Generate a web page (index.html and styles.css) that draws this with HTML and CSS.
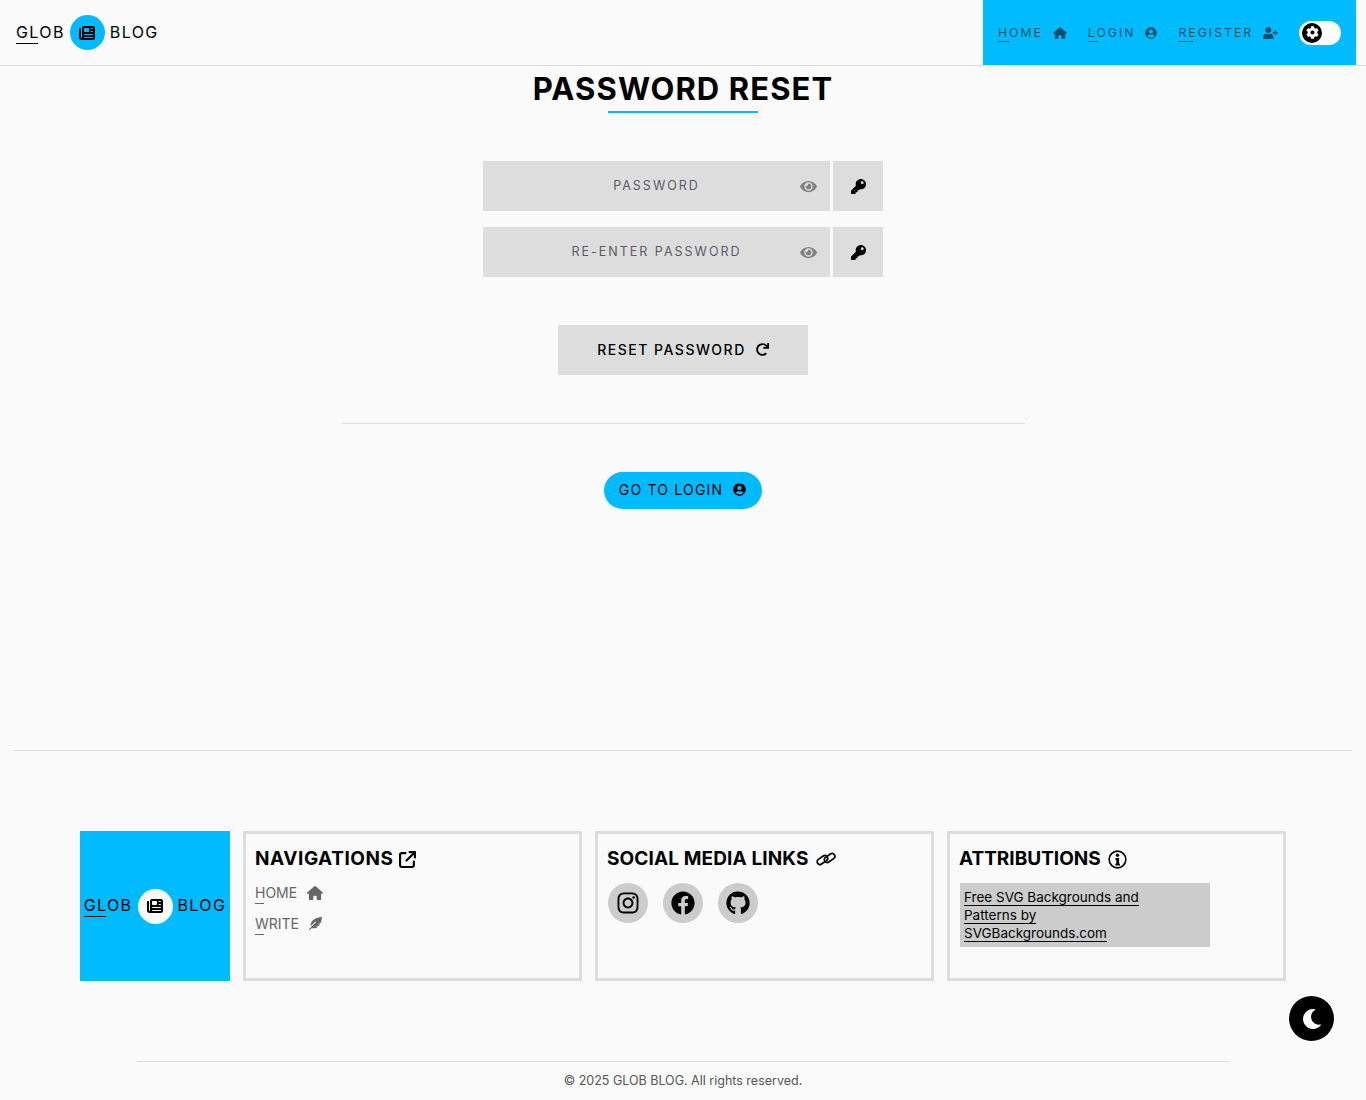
FILE: index.html
```html
<!DOCTYPE html>
<html lang="en">

<head>
    <meta charset="UTF-8">
    <title>Password Reset</title>
    <link rel="stylesheet" href="styles.css">
</head>

<body>
    <svg class="defs" aria-hidden="true">
        <symbol id="i-news" viewBox="0 0 512 512"><path d="M96 96c0-35.3 28.7-64 64-64H448c35.3 0 64 28.7 64 64V416c0 35.3-28.7 64-64 64H80c-44.2 0-80-35.8-80-80V128c0-17.7 14.3-32 32-32s32 14.3 32 32V400c0 8.8 7.2 16 16 16s16-7.2 16-16V96zm64 24v80c0 13.3 10.7 24 24 24H296c13.3 0 24-10.7 24-24V120c0-13.3-10.7-24-24-24H184c-13.3 0-24 10.7-24 24zm208-8c0 8.8 7.2 16 16 16h48c8.8 0 16-7.2 16-16s-7.2-16-16-16H384c-8.8 0-16 7.2-16 16zm0 96c0 8.8 7.2 16 16 16h48c8.8 0 16-7.2 16-16s-7.2-16-16-16H384c-8.8 0-16 7.2-16 16zM160 304c0 8.8 7.2 16 16 16H432c8.8 0 16-7.2 16-16s-7.2-16-16-16H176c-8.8 0-16 7.2-16 16zm0 96c0 8.8 7.2 16 16 16H432c8.8 0 16-7.2 16-16s-7.2-16-16-16H176c-8.8 0-16 7.2-16 16z"/></symbol>
        <symbol id="i-home" viewBox="0 0 576 512"><path d="M575.8 255.5c0 18-15 32.1-32 32.1h-32l.7 160.2c0 2.7-.2 5.4-.5 8.1V472c0 22.1-17.9 40-40 40H456c-1.1 0-2.2 0-3.3-.1c-1.4 .1-2.8 .1-4.2 .1H416 392c-22.1 0-40-17.9-40-40V448 384c0-17.7-14.3-32-32-32H256c-17.7 0-32 14.3-32 32v64 24c0 22.1-17.9 40-40 40H160 128.1c-1.5 0-3-.1-4.5-.2c-1.2 .1-2.4 .2-3.6 .2H104c-22.1 0-40-17.9-40-40V360c0-.9 0-1.9 .1-2.8V287.6H32c-18 0-32-14-32-32.1c0-9 3-17 10-24L266.4 8c7-7 15-8 22-8s15 2 21 7L564.8 231.5c8 7 12 15 11 24z"/></symbol>
        <symbol id="i-user" viewBox="0 0 496 512"><path d="M248 8C111 8 0 119 0 256s111 248 248 248 248-111 248-248S385 8 248 8zm0 96c48.6 0 88 39.4 88 88s-39.4 88-88 88-88-39.4-88-88 39.4-88 88-88zm0 344c-58.7 0-111.3-26.6-146.5-68.2 18.8-35.4 55.6-59.8 98.5-59.8 2.4 0 4.8.4 7.1 1.1 13 4.2 26.6 6.9 40.9 6.9 14.3 0 28-2.7 40.9-6.9 2.3-.7 4.7-1.1 7.1-1.1 42.9 0 79.7 24.4 98.5 59.8C359.3 421.4 306.7 448 248 448z"/></symbol>
        <symbol id="i-user-plus" viewBox="0 0 640 512"><path d="M624 208h-64v-64c0-8.8-7.2-16-16-16h-32c-8.8 0-16 7.2-16 16v64h-64c-8.8 0-16 7.2-16 16v32c0 8.8 7.2 16 16 16h64v64c0 8.8 7.2 16 16 16h32c8.8 0 16-7.2 16-16v-64h64c8.8 0 16-7.2 16-16v-32c0-8.8-7.2-16-16-16zm-400 48c70.7 0 128-57.3 128-128S294.7 0 224 0 96 57.3 96 128s57.3 128 128 128zm89.6 32h-16.7c-22.2 10.2-46.9 16-72.9 16s-50.6-5.8-72.9-16h-16.7C60.2 288 0 348.2 0 422.4V464c0 26.5 21.5 48 48 48h352c26.5 0 48-21.5 48-48v-41.6c0-74.2-60.2-134.4-134.4-134.4z"/></symbol>
        <symbol id="i-cog" viewBox="0 0 512 512"><path d="M487.4 315.7l-42.6-24.6c4.3-23.2 4.3-47 0-70.2l42.6-24.6c4.9-2.8 7.1-8.6 5.5-14-11.1-35.6-30-67.8-54.7-94.6-3.8-4.1-10-5.1-14.8-2.3L380.8 110c-17.9-15.4-38.5-27.3-60.8-35.1V25.8c0-5.6-3.9-10.5-9.4-11.7-36.7-8.2-74.3-7.8-109.2 0-5.5 1.2-9.4 6.1-9.4 11.7V75c-22.2 7.9-42.8 19.8-60.8 35.1L88.7 85.5c-4.9-2.8-11-1.9-14.8 2.3-24.7 26.7-43.6 58.9-54.7 94.6-1.7 5.4.6 11.2 5.5 14L67.3 221c-4.3 23.2-4.3 47 0 70.2l-42.6 24.6c-4.9 2.8-7.1 8.6-5.5 14 11.1 35.6 30 67.8 54.7 94.6 3.8 4.1 10 5.1 14.8 2.3l42.6-24.6c17.9 15.4 38.5 27.3 60.8 35.1v49.2c0 5.6 3.9 10.5 9.4 11.7 36.7 8.2 74.3 7.8 109.2 0 5.5-1.2 9.4-6.1 9.4-11.7v-49.2c22.2-7.9 42.8-19.8 60.8-35.1l42.6 24.6c4.9 2.8 11 1.9 14.8-2.3 24.7-26.7 43.6-58.9 54.7-94.6 1.5-5.5-.7-11.3-5.6-14.1zM256 336c-44.1 0-80-35.9-80-80s35.9-80 80-80 80 35.9 80 80-35.9 80-80 80z"/></symbol>
        <symbol id="i-eye" viewBox="0 0 576 512"><path d="M572.52 241.4C518.29 135.59 410.93 64 288 64S57.68 135.64 3.48 241.41a32.35 32.35 0 0 0 0 29.19C57.71 376.41 165.07 448 288 448s230.32-71.64 284.52-177.41a32.35 32.35 0 0 0 0-29.19zM288 400a144 144 0 1 1 144-144 143.93 143.93 0 0 1-144 144zm0-240a95.31 95.31 0 0 0-25.31 3.79 47.85 47.85 0 0 1-66.9 66.9A95.78 95.78 0 1 0 288 160z"/></symbol>
        <symbol id="i-key" viewBox="0 0 512 512"><path d="M512 176.001C512 273.203 433.202 352 336 352c-11.22 0-22.19-1.062-32.827-3.069l-24.012 27.014A23.999 23.999 0 0 1 261.223 384H224v40c0 13.255-10.745 24-24 24h-40v40c0 13.255-10.745 24-24 24H24c-13.255 0-24-10.745-24-24v-78.059c0-6.365 2.529-12.47 7.029-16.971l161.802-161.802C163.108 213.814 160 195.271 160 176 160 78.798 238.797.001 335.999 0 433.488-.001 512 78.511 512 176.001zM336 128c0 26.51 21.49 48 48 48s48-21.49 48-48-21.49-48-48-48-48 21.49-48 48z"/></symbol>
        <symbol id="i-redo" viewBox="0 0 512 512"><path d="M500.33 0h-47.41a12 12 0 0 0-12 12.57l4 82.76A247.42 247.42 0 0 0 256 8C119.34 8 7.9 119.53 8 256.19 8.1 393.07 119.1 504 256 504a247.1 247.1 0 0 0 166.18-63.91 12 12 0 0 0 .48-17.43l-34-34a12 12 0 0 0-16.38-.55A176 176 0 1 1 402.1 157.8l-101.53-4.87a12 12 0 0 0-12.57 12v47.41a12 12 0 0 0 12 12h200.33a12 12 0 0 0 12-12V12a12 12 0 0 0-12-12z"/></symbol>
        <symbol id="i-external" viewBox="0 0 512 512"><path d="M320 0c-17.7 0-32 14.3-32 32s14.3 32 32 32h82.7L201.4 265.4c-12.5 12.5-12.5 32.8 0 45.3s32.8 12.5 45.3 0L448 109.3V192c0 17.7 14.3 32 32 32s32-14.3 32-32V32c0-17.7-14.3-32-32-32H320zM80 32C35.8 32 0 67.8 0 112V432c0 44.2 35.8 80 80 80H400c44.2 0 80-35.8 80-80V320c0-17.7-14.3-32-32-32s-32 14.3-32 32V432c0 8.8-7.2 16-16 16H80c-8.8 0-16-7.2-16-16V112c0-8.8 7.2-16 16-16H192c17.7 0 32-14.3 32-32s-14.3-32-32-32H80z"/></symbol>
        <symbol id="i-feather" viewBox="0 0 512 512"><path d="M512 0C460.22 3.56 96.44 38.2 71.01 287.61c-3.09 26.66-4.84 53.44-5.99 80.24l178.87-178.69c6.25-6.25 16.4-6.25 22.65 0s6.25 16.38 0 22.63L7.04 471.03c-9.38 9.37-9.38 24.57 0 33.94 9.38 9.37 24.59 9.37 33.98 0l57.13-57.07c42.09-.14 84.15-2.53 125.96-7.36 53.48-5.44 97.02-26.47 132.58-56.54H255.74l146.79-48.88c11.25-14.89 21.37-30.71 30.45-47.12h-81.14l106.54-53.21C500.29 132.86 510.19 26.26 512 0z"/></symbol>
        <symbol id="i-instagram" viewBox="0 0 448 512"><path d="M224.1 141c-63.6 0-114.9 51.3-114.9 114.9s51.3 114.9 114.9 114.9S339 319.5 339 255.9 287.7 141 224.1 141zm0 189.6c-41.1 0-74.7-33.5-74.7-74.7s33.5-74.7 74.7-74.7 74.7 33.5 74.7 74.7-33.6 74.7-74.7 74.7zm146.4-194.3c0 14.9-12 26.8-26.8 26.8-14.9 0-26.8-12-26.8-26.8s12-26.8 26.8-26.8 26.8 12 26.8 26.8zm76.1 27.2c-1.7-35.9-9.9-67.7-36.2-93.9-26.2-26.2-58-34.4-93.9-36.2-37-2.1-147.9-2.1-184.9 0-35.8 1.7-67.6 9.9-93.9 36.1s-34.4 58-36.2 93.9c-2.1 37-2.1 147.9 0 184.9 1.7 35.9 9.9 67.7 36.2 93.9s58 34.4 93.9 36.2c37 2.1 147.9 2.1 184.9 0 35.9-1.7 67.7-9.9 93.9-36.2 26.2-26.2 34.4-58 36.2-93.9 2.1-37 2.1-147.8 0-184.8zM398.8 388c-7.8 19.6-22.9 34.7-42.6 42.6-29.5 11.7-99.5 9-132.1 9s-102.7 2.6-132.1-9c-19.6-7.8-34.7-22.9-42.6-42.6-11.7-29.5-9-99.5-9-132.1s-2.6-102.7 9-132.1c7.8-19.6 22.9-34.7 42.6-42.6 29.5-11.7 99.5-9 132.1-9s102.7-2.6 132.1 9c19.6 7.8 34.7 22.9 42.6 42.6 11.7 29.5 9 99.5 9 132.1s2.7 102.7-9 132.1z"/></symbol>
        <symbol id="i-facebook" viewBox="0 0 512 512"><path d="M504 256C504 119 393 8 256 8S8 119 8 256c0 123.78 90.69 226.38 209.25 245V327.69h-63V256h63v-54.64c0-62.15 37-96.48 93.67-96.48 27.14 0 55.52 4.84 55.52 4.84v61h-31.28c-30.8 0-40.41 19.12-40.41 38.73V256h68.78l-11 71.69h-57.78V501C413.31 482.38 504 379.78 504 256z"/></symbol>
        <symbol id="i-github" viewBox="0 0 496 512"><path d="M165.9 397.4c0 2-2.3 3.6-5.2 3.6-3.3 0-5.6-1.6-5.6-3.6 0-2 2.3-3.6 5.2-3.6 3-.3 5.6 1.3 5.6 3.6zm-31.1-4.5c-.7 2 1.3 4.3 4.3 4.9 2.6 1 5.6 0 6.2-2s-1.3-4.3-4.3-5.2c-2.6-.7-5.5.3-6.2 2.3zm44.2-1.7c-2.9.7-4.9 2.6-4.6 4.9.3 2 2.9 3.3 5.9 2.6 2.9-.7 4.9-2.6 4.6-4.6-.3-1.9-3-3.2-5.9-2.9zM244.8 8C106.1 8 0 113.3 0 252c0 110.9 69.8 205.8 169.5 239.2 12.8 2.3 17.3-5.6 17.3-12.1 0-6.2-.3-40.4-.3-61.4 0 0-70 15-84.7-29.8 0 0-11.4-29.1-27.8-36.6 0 0-22.9-15.7 1.6-16 0 0 24.9 2 38.6 25.8 21.9 38.6 58.6 27.5 72.9 20.9 2.3-16 8.8-27.1 16-33.7-55.9-6.2-112.3-14.3-112.3-110.5 0-27.5 7.6-41.3 23.6-58.9-2.6-6.5-11.1-33.3 2.6-67.9 20.9-6.5 69 27 69 27 20-5.6 41.5-8.5 62.8-8.5s42.8 2.9 62.8 8.5c0 0 48.1-33.6 69-27 13.7 34.7 5.2 61.4 2.6 67.9 16 17.7 25.8 31.5 25.8 58.9 0 96.5-58.9 104.2-114.8 110.5 9.2 7.9 17 22.9 17 46.4 0 33.7-.3 75.4-.3 83.6 0 6.5 4.6 14.4 17.3 12.1C428.2 457.8 496 362.9 496 252 496 113.3 383.5 8 244.8 8z"/></symbol>
        <symbol id="i-moon" viewBox="0 0 512 512"><path d="M283.211 512c78.962 0 151.079-35.925 198.857-94.792 7.068-8.708-.639-21.43-11.562-19.35-124.203 23.654-238.262-71.576-238.262-196.954 0-72.222 38.662-138.635 101.498-174.394 9.686-5.512 7.25-20.197-3.756-22.23A258.156 258.156 0 0 0 283.211 0c-141.309 0-256 114.511-256 256 0 141.309 114.511 256 256 256z"/></symbol>
    </svg>

    <header class="topbar">
        <a class="logo">
            <span class="logo-text uline uline-logo">GLOB</span>
            <span class="logo-badge"><svg class="logo-icon"><use href="#i-news"/></svg></span>
            <span class="logo-text">BLOG</span>
        </a>
        <nav class="topnav">
            <a class="topnav-link"><span class="uline uline-home">HOME</span><svg class="nav-icon nav-icon-home"><use href="#i-home"/></svg></a>
            <a class="topnav-link"><span class="uline uline-login">LOGIN</span><svg class="nav-icon"><use href="#i-user"/></svg></a>
            <a class="topnav-link"><span class="uline uline-register">REGISTER</span><svg class="nav-icon nav-icon-plus"><use href="#i-user-plus"/></svg></a>
            <div class="toggle"><span class="toggle-knob"><svg class="toggle-icon"><use href="#i-cog"/></svg></span></div>
        </nav>
    </header>

    <main class="page">
        <h1 class="page-title">PASSWORD RESET</h1>
        <form class="reset-form">
            <div class="field">
                <div class="field-box">
                    <input class="field-input" type="password" placeholder="PASSWORD">
                    <svg class="field-eye"><use href="#i-eye"/></svg>
                </div>
                <span class="field-key"><svg class="key-icon"><use href="#i-key"/></svg></span>
            </div>
            <div class="field">
                <div class="field-box">
                    <input class="field-input" type="password" placeholder="RE-ENTER PASSWORD">
                    <svg class="field-eye"><use href="#i-eye"/></svg>
                </div>
                <span class="field-key"><svg class="key-icon"><use href="#i-key"/></svg></span>
            </div>
            <button class="reset-btn" type="button">RESET PASSWORD<svg class="redo-icon"><use href="#i-redo"/></svg></button>
        </form>
        <hr class="rule rule-half">
        <a class="login-btn">GO TO LOGIN<svg class="login-icon"><use href="#i-user"/></svg></a>
    </main>

    <hr class="rule rule-wide">

    <footer class="footer">
        <div class="footer-row">
            <a class="logo footer-logo">
                <span class="logo-text uline uline-logo">GLOB</span>
                <span class="logo-badge"><svg class="logo-icon"><use href="#i-news"/></svg></span>
                <span class="logo-text">BLOG</span>
            </a>
            <section class="card">
                <h2 class="card-title">NAVIGATIONS<svg class="title-icon"><use href="#i-external"/></svg></h2>
                <a class="card-link"><span class="uline uline-foot">HOME</span><svg class="card-link-icon"><use href="#i-home"/></svg></a>
                <a class="card-link"><span class="uline uline-foot">WRITE</span><svg class="card-link-icon feather"><use href="#i-feather"/></svg></a>
            </section>
            <section class="card">
                <h2 class="card-title card-title-social">SOCIAL MEDIA LINKS
                    <svg class="title-icon chain" viewBox="0 0 20 16"><rect x="0.6" y="6.2" width="11.6" height="5.6" rx="2.8" transform="rotate(-35 6.4 9)"/><rect x="7.8" y="4.2" width="11.6" height="5.6" rx="2.8" transform="rotate(-35 13.6 7)"/></svg>
                </h2>
                <div class="socials">
                    <a class="social"><svg class="social-icon"><use href="#i-instagram"/></svg></a>
                    <a class="social"><svg class="social-icon"><use href="#i-facebook"/></svg></a>
                    <a class="social"><svg class="social-icon"><use href="#i-github"/></svg></a>
                </div>
            </section>
            <section class="card">
                <h2 class="card-title card-title-attrib">ATTRIBUTIONS
                    <svg class="title-icon info" viewBox="0 0 20 20"><circle class="info-ring" cx="10" cy="10" r="8.8"/><circle cx="10" cy="5.6" r="1.8"/><path d="M7.8 8.4h3.9v6h.9v1.8H7.8v-1.8h.9v-4.2h-.9z"/></svg>
                </h2>
                <div class="attrib"><a class="attrib-link">Free SVG Backgrounds and Patterns by SVGBackgrounds.com</a></div>
            </section>
        </div>
        <hr class="rule rule-narrow">
        <p class="copyright">© 2025 GLOB BLOG. All rights reserved.</p>
    </footer>

    <a class="theme-btn"><svg class="moon-icon"><use href="#i-moon"/></svg></a>
</body>

</html>
```

FILE: styles.css
```css
* {
    box-sizing: border-box;
    margin: 0;
    padding: 0;
}

body {
    background: #fafafa;
    color: #000;
    font-family: "Inter", "Liberation Sans", sans-serif;
    height: 1100px;
    overflow: hidden;
}

a {
    color: inherit;
    text-decoration: none;
}

svg {
    fill: currentColor;
}

.defs {
    display: none;
}

/* first-letter underline */
.uline {
    position: relative;
}

.uline::after {
    content: "";
    position: absolute;
    left: 0;
    bottom: -2px;
    height: 1px;
    background: currentColor;
}

.uline-logo::after {
    width: 22px;
    bottom: -2px;
}

.uline-home::after {
    width: 11px;
}

.uline-login::after {
    width: 10px;
}

.uline-register::after {
    width: 15px;
}

.uline-foot::after {
    width: 9px;
    bottom: -3px;
}

/* header */
.topbar {
    display: flex;
    justify-content: space-between;
    height: 66px;
    padding: 0 10px 0 16px;
    border-bottom: 1px solid #ddd;
}

.logo {
    display: flex;
    align-items: center;
    gap: 5px;
    font-size: 16px;
    letter-spacing: 1.4px;
}

.logo-text {
    margin-top: -2px;
}

.logo-badge {
    display: flex;
    align-items: center;
    justify-content: center;
    width: 35px;
    height: 35px;
    border-radius: 50%;
    background: #00bbff;
}

.logo-icon {
    width: 16px;
    height: 16px;
}

.topnav {
    display: flex;
    align-items: center;
    width: 373px;
    padding-left: 15px;
    background: #00bbff;
    color: #00506e;
}

.topnav-link {
    display: flex;
    align-items: center;
    margin-right: 21px;
    font-size: 12.1px;
    letter-spacing: 2.1px;
}

.nav-icon {
    width: 12px;
    height: 12px;
    margin-left: 10px;
}

.nav-icon-home {
    width: 14px;
}

.nav-icon-plus {
    width: 15px;
}

.toggle {
    width: 42px;
    height: 24px;
    padding: 2px 3px;
    border-radius: 12px;
    background: #fff;
}

.toggle-knob {
    display: flex;
    align-items: center;
    justify-content: center;
    width: 20px;
    height: 20px;
    border-radius: 50%;
    background: #000;
    color: #fff;
}

.toggle-icon {
    width: 13px;
    height: 13px;
}

/* reset form */
.page {
    display: flex;
    flex-direction: column;
    align-items: center;
    height: 684px;
}

.page-title {
    position: relative;
    margin-top: 4px;
    font-size: 31px;
    line-height: 38px;
    font-weight: 700;
    letter-spacing: 1.1px;
}

.page-title::after {
    content: "";
    position: absolute;
    left: 50%;
    bottom: -5px;
    width: 150px;
    height: 2px;
    margin-left: -75px;
    background: #00bbff;
}

.reset-form {
    display: flex;
    flex-direction: column;
    align-items: center;
    gap: 16px;
    width: 400px;
    margin-top: 53px;
}

.field {
    display: flex;
    gap: 3px;
    width: 400px;
    height: 50px;
}

.field-box {
    position: relative;
    flex: 1;
}

.field-input {
    width: 100%;
    height: 100%;
    padding-bottom: 2px;
    border: 0;
    background: #ddd;
    font-family: inherit;
    font-size: 12.5px;
    letter-spacing: 2px;
    text-align: center;
}

.field-input::placeholder {
    color: #5b5b66;
    opacity: 1;
}

.field-eye {
    position: absolute;
    right: 13px;
    top: 18px;
    width: 17px;
    height: 15px;
    color: #808080;
}

.field-key {
    display: flex;
    align-items: center;
    justify-content: center;
    width: 50px;
    background: #ddd;
}

.key-icon {
    width: 15px;
    height: 15px;
}

.reset-btn {
    display: flex;
    align-items: center;
    justify-content: center;
    width: 250px;
    height: 50px;
    margin-top: 32px;
    padding-bottom: 2px;
    border: 0;
    background: #ddd;
    color: #000;
    font-family: inherit;
    font-size: 14px;
    font-weight: 500;
    letter-spacing: 1.5px;
}

.redo-icon {
    width: 13px;
    height: 13px;
    margin-left: 10px;
}

.login-btn {
    display: flex;
    align-items: center;
    height: 37px;
    padding: 0 16px 2px 15px;
    border-radius: 19px;
    background: #00bbff;
    font-size: 14px;
    letter-spacing: 1.2px;
}

.login-icon {
    width: 13px;
    height: 13px;
    margin-left: 10px;
}

/* rules */
.rule {
    border: 0;
    height: 1px;
    background: #ddd;
}

.rule-half {
    width: 683px;
    margin: 48px 0;
}

.rule-wide {
    width: 1338px;
    margin: 0 14px;
}

.rule-narrow {
    width: 1092px;
    margin: 80px auto 0;
}

/* footer */
.footer {
    padding-top: 80px;
}

.footer-row {
    display: flex;
    gap: 13px;
    padding-left: 80px;
}

.footer-logo {
    flex: none;
    justify-content: center;
    width: 150px;
    height: 150px;
    background: #00bbff;
}

.footer-logo .logo-badge {
    background: #fafafa;
}

.card {
    width: 339px;
    height: 150px;
    padding: 11px 9px 9px;
    border: 3px solid #ddd;
}

.card-title {
    display: flex;
    align-items: center;
    gap: 6px;
    margin-bottom: 4px;
    font-size: 19px;
    line-height: 28px;
    font-weight: 700;
    letter-spacing: 0.55px;
}

.card-title-social {
    gap: 7px;
    margin-bottom: 10px;
    letter-spacing: 0.12px;
}

.card-title-attrib {
    gap: 7px;
    margin-bottom: 10px;
    letter-spacing: 0;
}

.title-icon {
    width: 17px;
    height: 17px;
}

.chain {
    width: 20px;
    height: 16px;
}

.chain rect {
    fill: none;
    stroke: currentColor;
    stroke-width: 1.7;
}

.info {
    width: 19px;
    height: 19px;
}

.info-ring {
    fill: none;
    stroke: currentColor;
    stroke-width: 1.7;
}

.card-link {
    display: flex;
    align-items: center;
    height: 31px;
    color: #666;
    font-size: 14px;
}

.card-link-icon {
    width: 16px;
    height: 14px;
    margin-left: 10px;
}

.feather {
    margin-left: 9px;
    width: 15px;
    height: 13px;
}

.socials {
    display: flex;
    gap: 15px;
    margin-left: 1px;
}

.social {
    display: flex;
    align-items: center;
    justify-content: center;
    width: 40px;
    height: 40px;
    border-radius: 50%;
    background: #ccc;
}

.social-icon {
    width: 24px;
    height: 24px;
}

.attrib {
    width: 250px;
    margin-left: 1px;
    padding: 5px 60px 5px 4px;
    background: #ccc;
    font-size: 13.5px;
    line-height: 18px;
}

.attrib-link {
    border-bottom: 1px solid #000;
}

.copyright {
    margin-top: 10px;
    color: #555;
    font-size: 12.5px;
    line-height: 17px;
    text-align: center;
}

/* floating theme button */
.theme-btn {
    position: fixed;
    left: 1289px;
    top: 996px;
    display: flex;
    align-items: center;
    justify-content: center;
    width: 45px;
    height: 45px;
    border-radius: 50%;
    background: #000;
    color: #fff;
}

.moon-icon {
    width: 20px;
    height: 20px;
}
```
